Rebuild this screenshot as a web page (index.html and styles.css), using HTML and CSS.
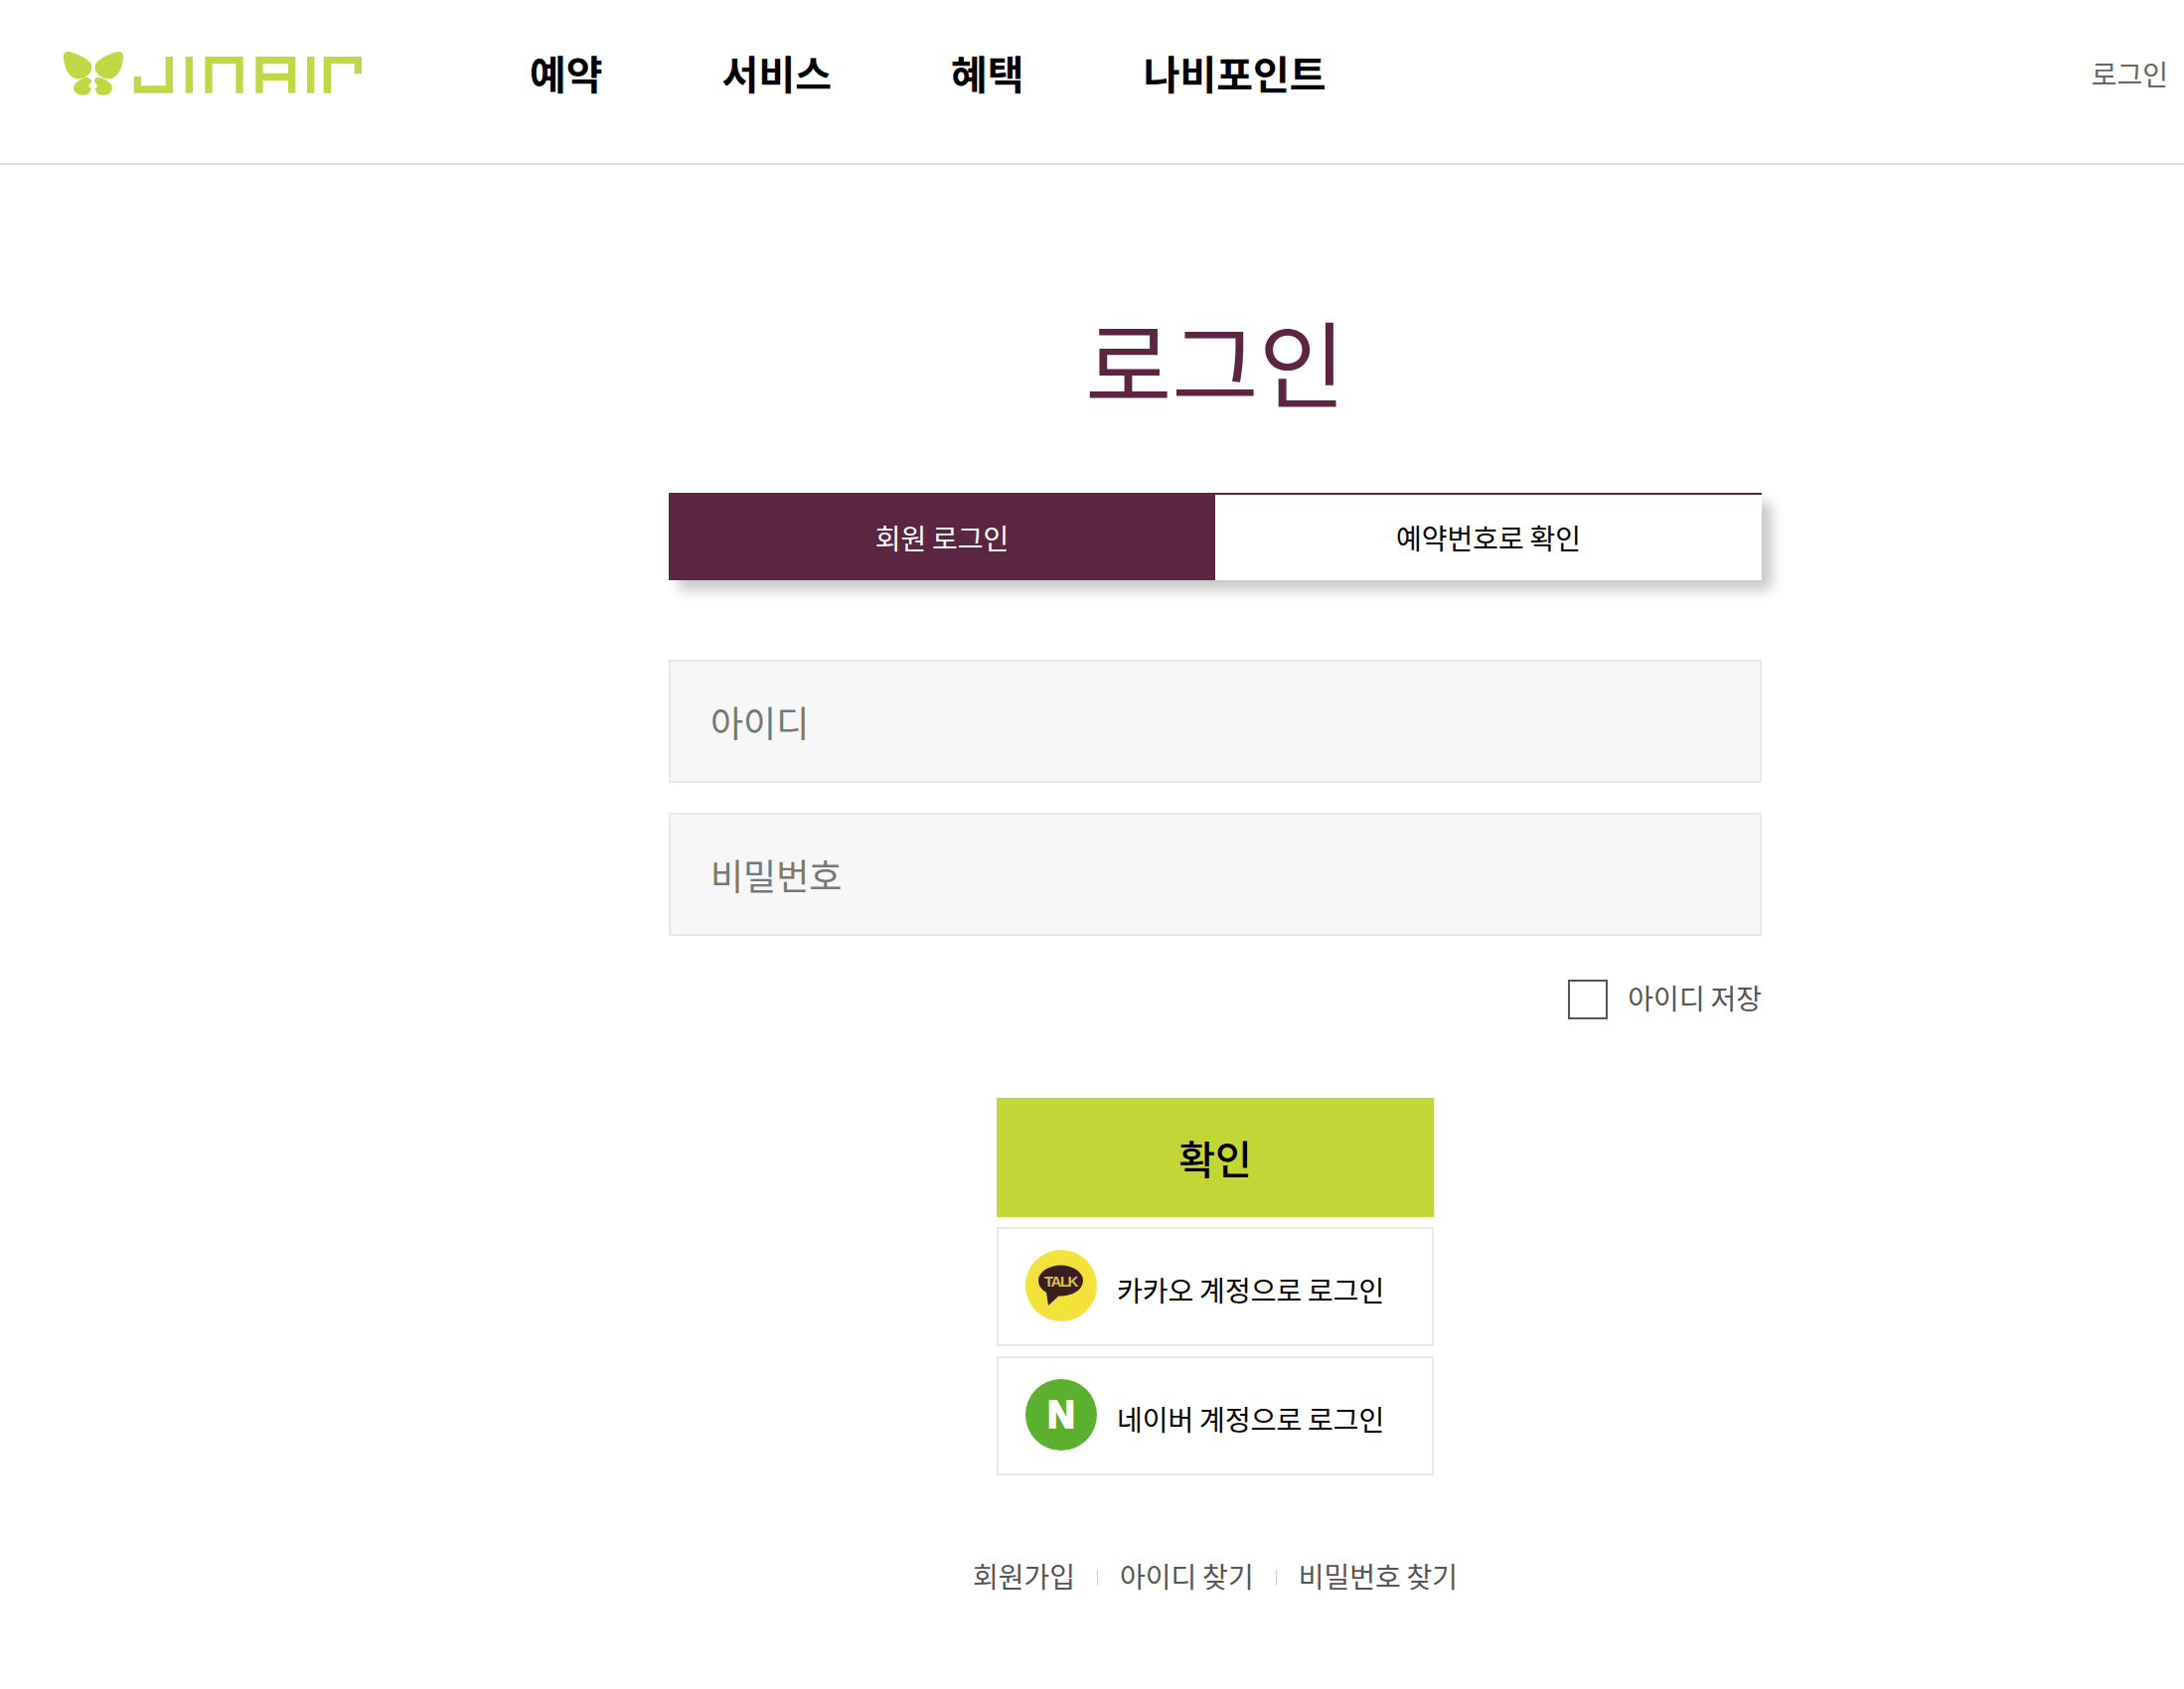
FILE: index.html
```html
<!DOCTYPE html>
<html lang="ko">
<head>
<meta charset="utf-8">
<title>로그인 | 진에어</title>
<link rel="stylesheet" href="styles.css">
</head>
<body>
<header class="site-header">
  <a class="logo" href="#" aria-label="JINAIR">
    <svg viewBox="70 95 900 132" width="300" height="44" aria-hidden="true">
      <g fill="#bfd845">
        <path d="M70 108C70 96 80 93 90 96C112 102 136 113 150 127C156 134 156 148 152 155C146 166 134 174 122 176C112 178 102 176 94 170C78 158 70 132 70 108Z"/>
        <path d="M250 108C250 96 240 93 230 96C208 102 184 113 170 127C164 134 164 148 168 155C174 166 186 174 198 176C208 178 218 176 226 170C242 158 250 132 250 108Z"/>
        <path d="M140 172C148 174 155 180 155 186L145 198L152 205C152 214 148 220 144 223C134 227 122 227 113 223C105 219 100 212 100 205C100 198 104 191 110 187C118 180 130 173 140 172Z"/>
        <path d="M172 172C164 174 163 180 163 186L173 198L166 205C166 214 170 220 174 223C184 227 196 227 205 223C212 219 217 212 217 205C217 198 213 191 207 187C199 180 184 173 172 172Z"/>
      </g>
      <g fill="none" stroke="#bfd845" stroke-width="22">
        <path d="M293 170V209H389V110"/>
        <path d="M449 110V220"/>
        <path d="M508 220V121H601V220"/>
        <path d="M661 220V121H759V220M661 171H759"/>
        <path d="M816 110V220"/>
        <path d="M866 220V121H959V162"/>
      </g>
    </svg>
  </a>
  <nav class="main-nav">
    <a href="#">예약</a>
    <a href="#">서비스</a>
    <a href="#">혜택</a>
    <a href="#">나비포인트</a>
  </nav>
  <a class="header-login" href="#">로그인</a>
</header>

<main class="login">
  <h1 class="login-title">로그인</h1>
  <div class="tabs">
    <a class="tab tab-active" href="#">회원 로그인</a>
    <a class="tab" href="#">예약번호로 확인</a>
  </div>
  <form class="login-form">
    <input class="field" type="text" placeholder="아이디">
    <input class="field" type="password" placeholder="비밀번호">
    <label class="remember"><span class="checkbox"></span><span class="remember-text">아이디 저장</span></label>
    <div class="actions">
      <button class="btn-submit" type="button">확인</button>
      <a class="btn-social" href="#">
        <svg class="social-icon" viewBox="0 0 72 72" aria-hidden="true">
          <circle cx="36" cy="36" r="36" fill="#f5e13c"/>
          <ellipse cx="35.5" cy="31" rx="22.5" ry="15.5" fill="#3b1f1e"/>
          <path d="M21 42L23 56L34 46Z" fill="#3b1f1e"/>
          <text class="talk-text" x="35.5" y="37" text-anchor="middle">TALK</text>
        </svg>
        <span>카카오 계정으로 로그인</span>
      </a>
      <a class="btn-social" href="#">
        <svg class="social-icon" viewBox="0 0 72 72" aria-hidden="true">
          <circle cx="36" cy="36" r="36" fill="#5cb030"/>
          <text class="naver-text" x="36" y="49" text-anchor="middle">N</text>
        </svg>
        <span>네이버 계정으로 로그인</span>
      </a>
    </div>
  </form>
  <ul class="links">
    <li><a href="#">회원가입</a></li>
    <li><a href="#">아이디 찾기</a></li>
    <li><a href="#">비밀번호 찾기</a></li>
  </ul>
</main>
</body>
</html>
```
FILE: styles.css
```css
* { box-sizing: border-box; }
html, body { margin: 0; padding: 0; background: #fff; }
body { font-family: "Noto Sans CJK KR", "Noto Sans", sans-serif; color: #000; word-spacing: -2px; }
a { color: inherit; text-decoration: none; }

.site-header {
  display: flex;
  align-items: flex-start;
  height: 166px;
  padding: 52px 16px 0 64px;
  border-bottom: 2px solid #e0e0e0;
}
.logo { display: block; width: 300px; height: 44px; }
.logo svg { display: block; }
.main-nav {
  display: flex;
  gap: 120px;
  margin-left: 169px;
  font-size: 40px;
  font-weight: 700;
  line-height: 42px;
}
.header-login {
  margin-left: auto;
  font-size: 28px;
  line-height: 44px;
  color: #666;
}

.login { width: 1100px; margin-left: 673px; }
.login-title {
  margin: 147px 0 0;
  height: 183px;
  font-size: 95px;
  font-weight: 400;
  line-height: 100px;
  text-align: center;
  color: #5c2541;
}
.tabs {
  display: flex;
  height: 88px;
  border-top: 2px solid #5c2541;
  box-shadow: 10px 10px 12px rgba(0, 0, 0, .22);
}
.tab {
  flex: 1;
  display: flex;
  align-items: center;
  justify-content: center;
  font-size: 28px;
  background: #fff;
}
.tab-active { background: #5c2541; color: #fff; }

.login-form { display: flex; flex-direction: column; margin-top: 80px; }
.field {
  display: block;
  width: 100%;
  height: 124px;
  margin-bottom: 30px;
  padding: 0 40px;
  border: 2px solid #e8e8e8;
  background: #f7f7f7;
  font: 36px "Noto Sans CJK KR", "Noto Sans", sans-serif;
  outline: none;
}
.field::placeholder { color: #777; opacity: 1; }
.remember {
  display: flex;
  justify-content: flex-end;
  align-items: center;
  gap: 20px;
  height: 40px;
  margin-top: 14px;
  font-size: 28px;
  color: #555;
}
.remember-text { margin-bottom: 5px; }
.checkbox { width: 40px; height: 40px; border: 2px solid #555; background: #fff; }

.actions {
  display: flex;
  flex-direction: column;
  gap: 10px;
  width: 440px;
  margin: 79px auto 0;
}
.btn-submit {
  height: 120px;
  padding: 0;
  border: 0;
  background: #c2d736;
  color: #000;
  font: 500 40px "Noto Sans CJK KR", "Noto Sans", sans-serif;
}
.btn-social {
  display: flex;
  align-items: flex-start;
  gap: 20px;
  height: 120px;
  padding: 21px 0 0 27px;
  border: 2px solid #e8e8e8;
  font-size: 28px;
  line-height: 36px;
}
.btn-social span { margin-top: 22px; }
.social-icon { width: 72px; height: 72px; flex: none; }
.talk-text { font: 700 15px "Liberation Sans", sans-serif; letter-spacing: -1.5px; fill: #d9c24c; }
.naver-text { font: 700 38px "Liberation Sans", sans-serif; fill: #fff; stroke: #fff; stroke-width: 2; }

.links {
  display: flex;
  justify-content: center;
  margin: 81px 0 0;
  padding: 0;
  list-style: none;
  font-size: 28px;
  line-height: 40px;
  color: #555;
}
.links li { display: flex; align-items: center; }
.links li + li::before {
  content: "";
  width: 1px;
  height: 16px;
  margin: 4px 22px 0;
  background: #ccc;
}
```
